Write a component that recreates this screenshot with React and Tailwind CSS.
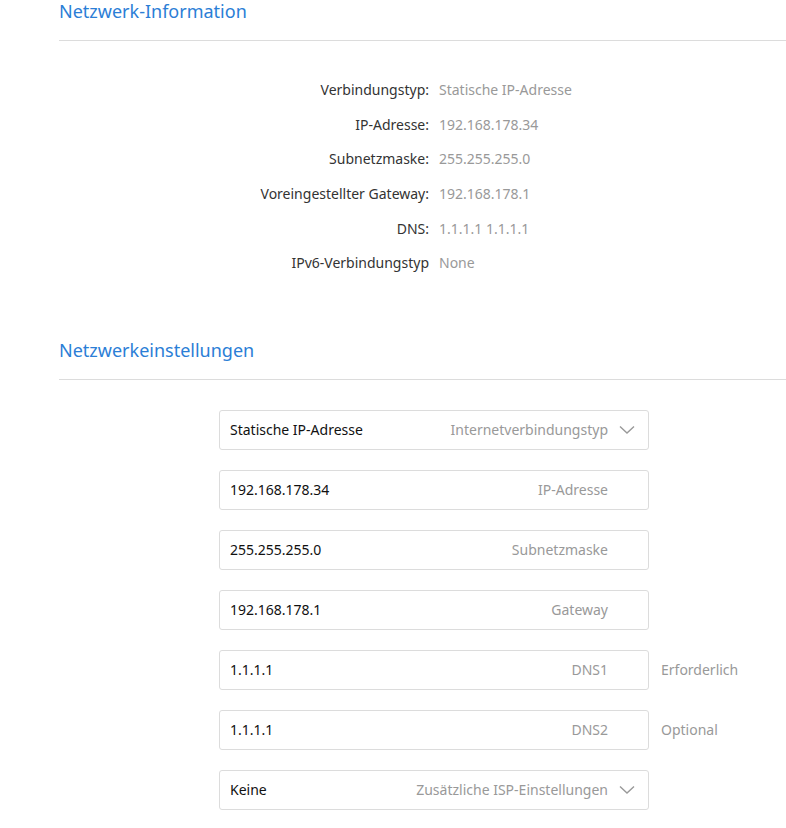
import React from 'react';

const info = [
  ['Verbindungstyp:', 'Statische IP-Adresse'],
  ['IP-Adresse:', '192.168.178.34'],
  ['Subnetzmaske:', '255.255.255.0'],
  ['Voreingestellter Gateway:', '192.168.178.1'],
  ['DNS:', '1.1.1.1 1.1.1.1'],
  ['IPv6-Verbindungstyp', 'None'],
];

const fields = [
  { value: 'Statische IP-Adresse', label: 'Internetverbindungstyp', select: true },
  { value: '192.168.178.34', label: 'IP-Adresse' },
  { value: '255.255.255.0', label: 'Subnetzmaske' },
  { value: '192.168.178.1', label: 'Gateway' },
  { value: '1.1.1.1', label: 'DNS1', hint: 'Erforderlich' },
  { value: '1.1.1.1', label: 'DNS2', hint: 'Optional' },
  { value: 'Keine', label: 'Zusätzliche ISP-Einstellungen', select: true },
];

function Chevron() {
  return (
    <svg width="16" height="10" viewBox="0 0 16 10" fill="none" className="ml-[11px]">
      <path d="M1 1.5 L8 8 L15 1.5" stroke="#999" strokeWidth="1.4" />
    </svg>
  );
}

function Heading({ children }) {
  return (
    <div>
      <h2 className="h-[22px] leading-[22px] text-[18px] text-[#2b7ed6]">{children}</h2>
      <div className="mt-[18px] h-px bg-[#dcdcdc]" />
    </div>
  );
}

export default function App() {
  return (
    <div className="w-[786px] h-[828px] bg-white pl-[59px] overflow-hidden" style={{ fontFamily: '"Noto Sans", "Liberation Sans", Arial, sans-serif' }}>
      <Heading>Netzwerk-Information</Heading>

      <div className="mt-[32px] text-[14px] leading-[20px]">
        {info.map(([k, v]) => (
          <div key={k} className="flex h-[34.6px] items-center">
            <div className="w-[370px] text-right text-[#333]">{k}</div>
            <div className="pl-[10px] text-[#999]">{v}</div>
          </div>
        ))}
      </div>

      <div className="mt-[58px]">
        <Heading>Netzwerkeinstellungen</Heading>
      </div>

      <div className="mt-[30px] ml-[160px] flex flex-col gap-[20px] text-[14px] leading-[20px]">
        {fields.map((f, i) => (
          <div key={i} className="flex items-center">
            <div className={`w-[430px] h-[40px] border border-[#dcdcdc] rounded-[3px] flex items-center pl-[10px] ${f.select ? 'pr-[13px]' : 'pr-[40px]'}`}>
              <span className="flex-1 text-[#111]">{f.value}</span>
              <span className="text-[#999]">{f.label}</span>
              {f.select && <Chevron />}
            </div>
            {f.hint && <span className="ml-[12px] text-[#999]">{f.hint}</span>}
          </div>
        ))}
      </div>
    </div>
  );
}
